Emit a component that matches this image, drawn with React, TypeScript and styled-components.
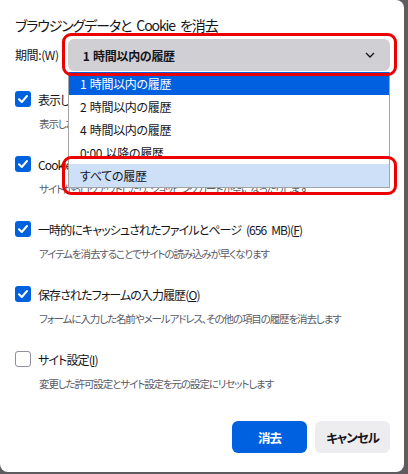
import React from "react";
import styled, { createGlobalStyle } from "styled-components";

const GlobalStyle = createGlobalStyle`
  html, body { margin: 0; padding: 0; }
  body {
    background: #5e5b5f;
    font-family: "Noto Sans CJK JP", "Noto Sans", "Liberation Sans", sans-serif;
    font-feature-settings: "palt";
    color: #15141a;
    white-space: nowrap;
  }
`;

const Dialog = styled.div`
  position: relative;
  box-sizing: border-box;
  width: 404px;
  height: 472px;
  background: #ffffff;
  border-radius: 0 8px 8px 8px;
  padding: 15px 14px 19px 15px;
  display: flex;
  flex-direction: column;
`;

const Title = styled.h1`
  margin: 0;
  font-size: 14px;
  letter-spacing: -1.1px;
  word-spacing: 3px;
  font-weight: 400;
  line-height: 20px;
`;

const PeriodRow = styled.div`
  display: flex;
  align-items: center;
  margin-top: 4px;
`;

const PeriodLabel = styled.span`
  width: 53px;
  font-size: 12px;
  letter-spacing: -0.4px;
  line-height: 18px;
`;

const SelectBox = styled.div`
  box-sizing: border-box;
  width: 323px;
  height: 32px;
  background: #cfcfd4;
  border-radius: 6px;
  display: flex;
  align-items: center;
  justify-content: space-between;
  padding: 0 15px 0 15px;
  font-size: 12px;
  letter-spacing: -0.3px;
  word-spacing: 1px;
  font-weight: 700;
`;

const OptionList = styled.div`
  display: flex;
  flex-direction: column;
  gap: 25px;
  margin-top: 20px;
`;

const Option = styled.div`
  display: flex;
  flex-direction: column;
`;

const OptionRow = styled.label`
  display: flex;
  align-items: center;
  height: 16px;
  gap: 7px;
  font-size: 12px;
  letter-spacing: -0.9px;
  word-spacing: 3px;
`;

const Box = styled.span<{ $checked: boolean }>`
  box-sizing: border-box;
  width: 16px;
  height: 16px;
  flex: none;
  border-radius: 3px;
  background: ${(p) => (p.$checked ? "#0061e0" : "#ffffff")};
  border: ${(p) => (p.$checked ? "none" : "1px solid #8f8f9d")};
  display: flex;
  align-items: center;
  justify-content: center;
`;

const Desc = styled.div`
  margin-top: 10px;
  margin-left: 24px;
  font-size: 10.5px;
  letter-spacing: -1.1px;
  line-height: 14px;
  color: #5b5b66;
`;

const Key = styled.span`
  text-decoration: underline;
`;

const Footer = styled.div`
  margin-top: auto;
  display: flex;
  justify-content: flex-end;
  gap: 8px;
`;

const Button = styled.button<{ $primary?: boolean }>`
  width: 75px;
  height: 32px;
  border: none;
  border-radius: 6px;
  font-family: inherit;
  font-feature-settings: "palt";
  font-size: 12.5px;
  letter-spacing: -1px;
  font-weight: 700;
  background: ${(p) => (p.$primary ? "#0061e0" : "#ededf0")};
  color: ${(p) => (p.$primary ? "#ffffff" : "#15141a")};
`;

const Dropdown = styled.div`
  position: absolute;
  left: 68px;
  top: 72px;
  width: 322px;
  box-sizing: border-box;
  background: #ffffff;
  border: 1px solid #a4a4a4;
  border-top: none;
  display: flex;
  flex-direction: column;
`;

const DropItem = styled.div<{ $state?: "selected" | "hover" }>`
  height: 23px;
  display: flex;
  align-items: center;
  padding-left: 11px;
  font-size: 12px;
  letter-spacing: -0.3px;
  word-spacing: 1px;
  background: ${(p) =>
    p.$state === "selected" ? "#0060df" : p.$state === "hover" ? "#cde0f8" : "transparent"};
  color: ${(p) => (p.$state === "selected" ? "#ffffff" : "#15141a")};
`;

const Highlight = styled.div<{ $top: number; $height: number }>`
  position: absolute;
  left: 62px;
  width: 335px;
  top: ${(p) => p.$top}px;
  height: ${(p) => p.$height}px;
  box-sizing: border-box;
  border: 3px solid #ec0000;
  border-radius: 9px;
`;

const Check = () => (
  <svg width="12" height="12" viewBox="0 0 12 12">
    <path d="M2 6.3 L4.8 9 L10 3" fill="none" stroke="#fff" strokeWidth="2" strokeLinecap="round" strokeLinejoin="round" />
  </svg>
);

const Chevron = () => (
  <svg width="10" height="6" viewBox="0 0 10 6">
    <path d="M1 1 L5 5 L9 1" fill="none" stroke="#15141a" strokeWidth="1.3" />
  </svg>
);

const items = [
  {
    checked: true,
    label: <>表示したページとダウンロードの履歴(<Key>H</Key>)</>,
    desc: "表示したサイトとダウンロードの履歴を消去します",
  },
  {
    checked: true,
    label: <>Cookie とサイトデータ (1.2 GB)(<Key>C</Key>)</>,
    desc: "サイトからログアウトしたり、ショッピングカートが空になったりします",
  },
  {
    checked: true,
    label: <>一時的にキャッシュされたファイルとページ (656 MB)(<Key>F</Key>)</>,
    desc: "アイテムを消去することでサイトの読み込みが早くなります",
  },
  {
    checked: true,
    label: <>保存されたフォームの入力履歴(<Key>O</Key>)</>,
    desc: "フォームに入力した名前やメールアドレス、その他の項目の履歴を消去します",
  },
  {
    checked: false,
    label: <>サイト設定(<Key>I</Key>)</>,
    desc: "変更した許可設定とサイト設定を元の設定にリセットします",
  },
];

export default function App() {
  return (
    <>
      <GlobalStyle />
      <Dialog>
        <Title>ブラウジングデータと Cookie を消去</Title>
        <PeriodRow>
          <PeriodLabel>期間:(W)</PeriodLabel>
          <SelectBox>
            <span>1 時間以内の履歴</span>
            <Chevron />
          </SelectBox>
        </PeriodRow>
        <OptionList>
          {items.map((it, i) => (
            <Option key={i}>
              <OptionRow>
                <Box $checked={it.checked}>{it.checked && <Check />}</Box>
                <span>{it.label}</span>
              </OptionRow>
              <Desc>{it.desc}</Desc>
            </Option>
          ))}
        </OptionList>
        <Footer>
          <Button $primary>消去</Button>
          <Button>キャンセル</Button>
        </Footer>
        <Dropdown>
          <DropItem $state="selected">1 時間以内の履歴</DropItem>
          <DropItem>2 時間以内の履歴</DropItem>
          <DropItem>4 時間以内の履歴</DropItem>
          <DropItem>0:00 以降の履歴</DropItem>
          <DropItem $state="hover">すべての履歴</DropItem>
        </Dropdown>
        <Highlight $top={33} $height={43} />
        <Highlight $top={156} $height={39} />
      </Dialog>
    </>
  );
}
